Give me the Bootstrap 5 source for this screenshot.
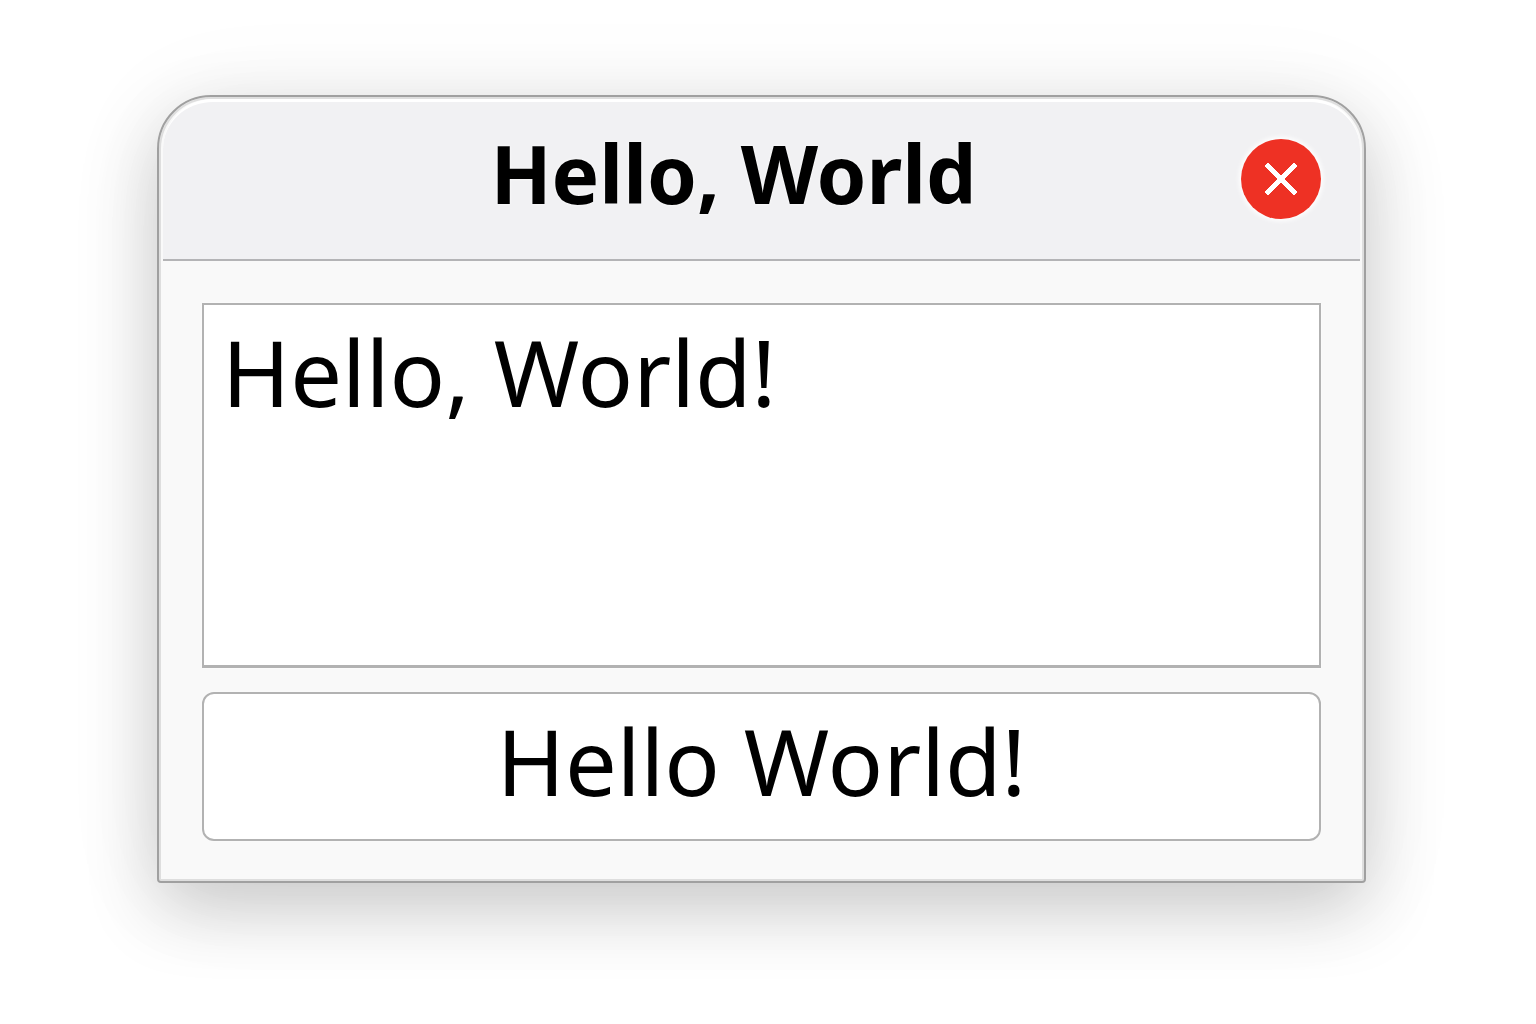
<!DOCTYPE html>
<html lang="en">
<head>
<meta charset="utf-8">
<meta name="viewport" content="width=device-width, initial-scale=1">
<title>Hello, World</title>
<link href="https://cdn.jsdelivr.net/npm/bootstrap@5.3.0/dist/css/bootstrap.min.css" rel="stylesheet">
<style>
body { font-family: "Noto Sans", "Open Sans", sans-serif; color: #000; background: #fff; }
.desktop { padding: 95px 170px 140px 157px; }
.window {
  background: #f9f9f9;
  border: 2px solid #a0a0a0;
  border-radius: 54px 54px 4px 4px;
  box-shadow: inset 0 0 0 2px #dedede, 0 26px 72px rgba(0,0,0,.19), 0 8px 110px rgba(0,0,0,.06);
  padding: 2px 4px 4px;
}
.titlebar {
  height: 162px;
  padding: 0 39px 4px 63px;
  background: #f1f1f3;
  border-top: 3px solid #fff;
  border-bottom: 2px solid #b4b4b6;
  border-radius: 50px 50px 0 0;
}
.title-text { font-size: 80px; line-height: 110px; padding-bottom: 12px; text-shadow: 0 0 3px #fff; }
.close-btn { width: 80px; height: 80px; background: #ee3124; box-shadow: 0 0 5px 2px #fff; }
.content { padding: 42px 39px 36px; gap: 24px; }
.message, .action {
  font-family: inherit; color: #000; background: #fff;
  border: 2px solid #b2b2b2; box-shadow: 0 0 2px #fff;
}
.message { height: 365px; font-size: 92px; line-height: 124px; padding: 5px 18px; resize: none; overflow: hidden; border-bottom-width: 3px; }
.action { font-size: 92px; line-height: 124px; padding: 5px 16px 16px; border-radius: 12px; }
</style>
</head>
<body>
<main class="desktop">
  <section class="window" aria-labelledby="window-title">
    <header class="titlebar d-flex align-items-center">
      <h1 class="title-text flex-grow-1 text-center fw-bold mb-0" id="window-title">Hello, World</h1>
      <button type="button" class="close-btn btn rounded-circle border-0 p-0 d-flex align-items-center justify-content-center" aria-label="Close">
        <svg width="36" height="36" viewBox="0 0 36 36" fill="#fff" stroke="#fff" stroke-width="1" stroke-linejoin="round" aria-hidden="true"><path d="M5 2 18 15 31 2 34 5 21 18 34 31 31 34 18 21 5 34 2 31 15 18 2 5Z"/></svg>
      </button>
    </header>
    <div class="content d-flex flex-column">
      <textarea class="message w-100 d-block" aria-label="Message" spellcheck="false">Hello, World!</textarea>
      <button type="button" class="action btn w-100">Hello World!</button>
    </div>
  </section>
</main>
<script src="https://cdn.jsdelivr.net/npm/bootstrap@5.3.0/dist/js/bootstrap.bundle.min.js"></script>
</body>
</html>
